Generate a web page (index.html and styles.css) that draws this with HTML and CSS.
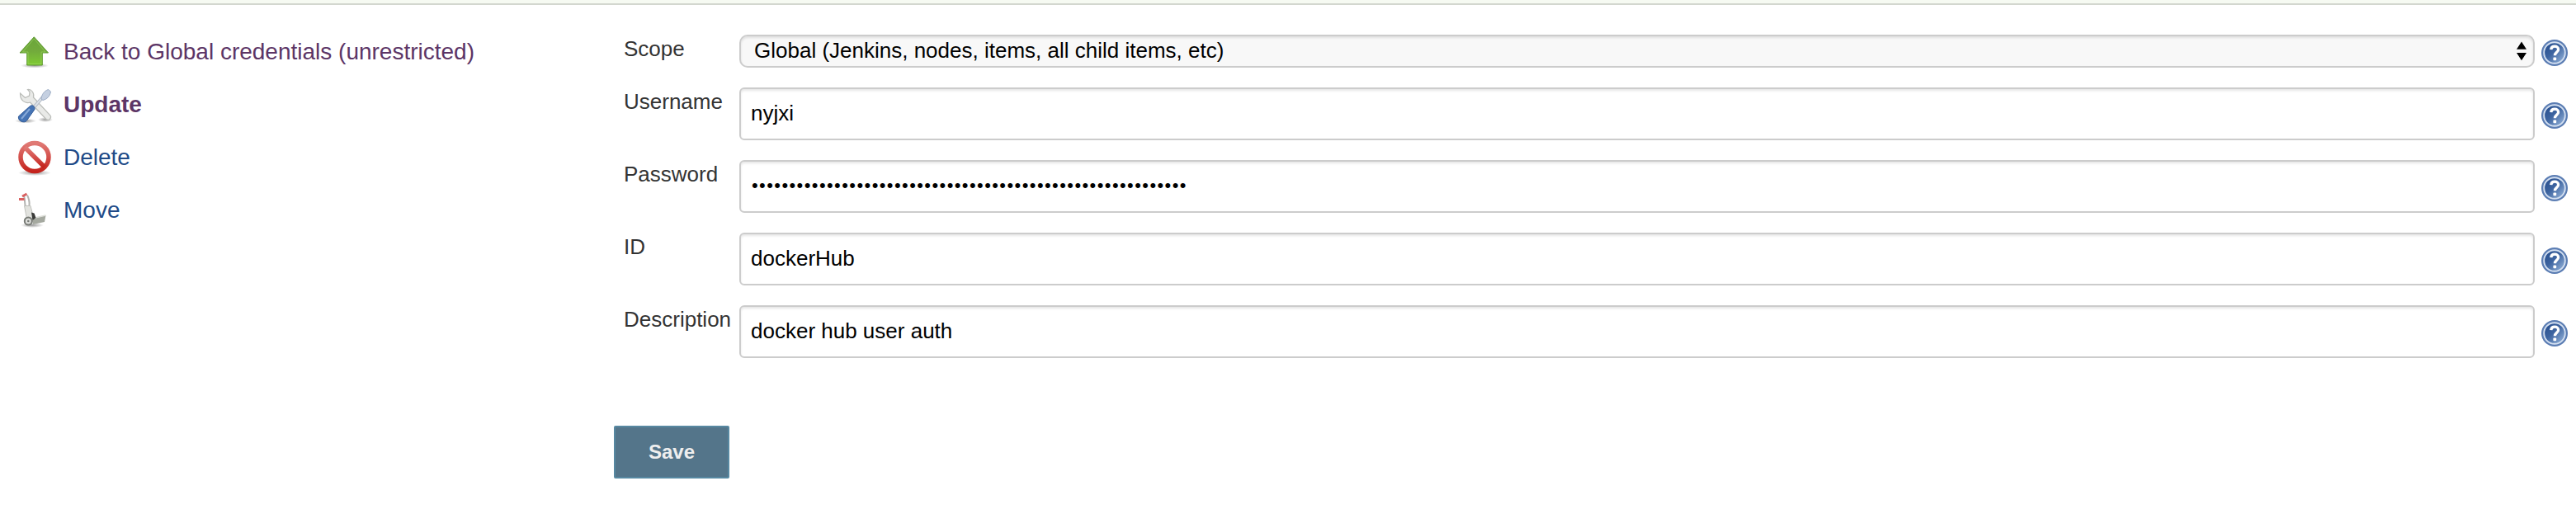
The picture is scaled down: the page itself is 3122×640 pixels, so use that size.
FILE: index.html
```
<!DOCTYPE html>
<html lang="en">
<head>
<meta charset="utf-8">
<title>Update credentials</title>
<link rel="stylesheet" href="styles.css">
</head>
<body>
<svg class="defs" width="0" height="0" aria-hidden="true">
  <defs>
    <linearGradient id="green" x1="0" y1="0" x2="0" y2="1"><stop offset="0" stop-color="#6aa53a"/><stop offset=".5" stop-color="#72aa3c"/><stop offset="1" stop-color="#7fcb32"/></linearGradient>
    <linearGradient id="red" x1="0" y1="0" x2="0" y2="1"><stop offset="0" stop-color="#e07a75"/><stop offset=".5" stop-color="#d4504b"/><stop offset="1" stop-color="#c4241d"/></linearGradient>
    <linearGradient id="blue" x1="0" y1="0" x2="1" y2="1"><stop offset="0" stop-color="#234a8a"/><stop offset=".45" stop-color="#3d64a0"/><stop offset="1" stop-color="#9dbbe0"/></linearGradient>
    <radialGradient id="shade"><stop offset="0" stop-color="#000" stop-opacity=".4"/><stop offset="1" stop-color="#000" stop-opacity="0"/></radialGradient>
    <symbol id="help" viewBox="0 0 32 32">
      <circle cx="16" cy="16" r="16" fill="#5b7db3"/>
      <circle cx="16" cy="16" r="12.8" fill="url(#blue)" stroke="#d3dff0" stroke-width="1.900"/>
      <path d="M11.700 12.200C12 9.200 14 8.200 16.200 8.200c2.600 0 4.400 1.500 4.400 3.700 0 3.300-4.200 3.500-4.200 7.300" fill="none" stroke="#fff" stroke-width="3.300"/>
      <rect x="14.400" y="21.500" width="3.800" height="3.700" rx="1" fill="#fff"/>
    </symbol>
  </defs>
</svg>
<header class="crumbs"></header>
<div class="page">
  <nav class="tasks">
    <a class="task visited" href="#">
      <svg class="icon" viewBox="0 0 48 48"><ellipse cx="24" cy="41.500" rx="17" ry="3" fill="url(#shade)"/><path d="M23.300 6.800 40.500 26H33.300V41H14.700V26H6Z" fill="url(#green)" stroke="#5f9a30" stroke-width="1"/><path d="M16 39.500V25h-6.500L23.300 9 37 25h-5v14.500Z" fill="none" stroke="#a6dc6a" stroke-opacity=".5"/></svg>
      <span>Back to Global credentials (unrestricted)</span></a>
    <a class="task visited current" href="#">
      <svg class="icon" viewBox="0 0 48 48"><ellipse cx="13" cy="44.500" rx="13" ry="3" fill="url(#shade)"/><ellipse cx="37" cy="43" rx="9" ry="3" fill="url(#shade)"/><path d="M15.500 6.500c4.500-.5 8.500 4 7 9.500L43 38c2 3-2 7-5 4.500L18.500 22C13 24 6 20 6.500 11l6 5.500 5-2.500.5-4.500Z" fill="#e9eae8" stroke="#bbbdb9" stroke-width="1.200"/><path d="m24 27 10-11.500" stroke="#aeb6c2" stroke-width="4"/><path d="m24 27 10-11.500" stroke="#dce1e8" stroke-width="2"/><path d="M32 18c.5-5 3-9.500 8.500-11.500l3 2.500c-1 6-4.500 9-9.500 10.500Z" fill="#c5d0e1" stroke="#9cacc5"/><path d="M18.500 26.500c2.500-2 6 .5 5.500 4L14.500 44C12 48 3 45 4.500 39Z" fill="#4674b5" stroke="#315b98"/><path d="M18 30 8 42" stroke="#86a9d8" stroke-width="2"/></svg>
      <span>Update</span></a>
    <a class="task" href="#">
      <svg class="icon" viewBox="0 0 48 48"><ellipse cx="24" cy="43.500" rx="20" ry="3.500" fill="url(#shade)"/><circle cx="24" cy="24.500" r="17" fill="#fff"/><g fill="none" stroke="url(#red)" stroke-width="5.500"><circle cx="24" cy="24.500" r="17"/><path d="m12 12.500 24 24"/></g></svg>
      <span>Delete</span></a>
    <a class="task" href="#">
      <svg class="icon" viewBox="0 0 48 48"><ellipse cx="21" cy="43" rx="14" ry="3" fill="url(#shade)"/><path d="M11 7.500c2 6 0 9 2.500 14M15 6.500c2 4 3 8 2.500 13" fill="none" stroke="#b4b4b2" stroke-width="2"/><path d="M11.500 19.500h7.500L23 35l-8 3Z" fill="#e2e3df" stroke="#c0c1bc"/><path d="m21 35.500 16.500-4.500-1.500 8-14 3Z" fill="#a5a9a0"/><path d="m22 34.500 15.500-3.500" stroke="#dcded8" stroke-width="1.500"/><path d="m20 27.500 3.500 1 2 5.500-4 3Z" fill="#3a3b39"/><path d="M5 11.500h6.500M9 8l5.500-3" fill="none" stroke="#d96060" stroke-width="3"/><circle cx="16.300" cy="38" r="4.500" fill="#dcddda" stroke="#777a75" stroke-width="2"/><circle cx="16.300" cy="38" r="1.300" fill="#777a75"/></svg>
      <span>Move</span></a>
  </nav>
  <main class="main">
    <div class="form">
      <label class="label" for="scope">Scope</label>
      <div class="select" id="scope"><span>Global (Jenkins, nodes, items, all child items, etc)</span>
        <svg class="arrows" viewBox="0 0 12 24"><path d="M6 .500 12 9.700H0ZM0 14H12L6 23.300Z"/></svg></div>
      <svg class="help select-help"><use href="#help"/></svg>
      <label class="label" for="username">Username</label><input class="input" id="username" type="text" value="nyjxi"><svg class="help"><use href="#help"/></svg>
      <label class="label" for="password">Password</label><div class="input password" id="password">••••••••••••••••••••••••••••••••••••••••••••••••••••••••••</div><svg class="help"><use href="#help"/></svg>
      <label class="label" for="id">ID</label><input class="input" id="id" type="text" value="dockerHub"><svg class="help"><use href="#help"/></svg>
      <label class="label" for="description">Description</label><input class="input" id="description" type="text" value="docker hub user auth"><svg class="help"><use href="#help"/></svg>
    </div>
    <div class="actions"><button class="save" type="button">Save</button></div>
  </main>
</div>
</body>
</html>
```
FILE: styles.css
```
* { box-sizing: border-box; }
body { margin: 0; background: #fff; color: #333; font-family: "Liberation Sans", Helvetica, Arial, sans-serif; font-size: 26px; }
.defs { display: block; }
.crumbs { height: 6px; background: #f6faf2; border-bottom: 2px solid #d3d7cf; }
.page { display: flex; padding-top: 30px; }
.tasks { flex: 0 0 744px; padding: 2px 0 0 18px; }
.task { display: flex; height: 64px; gap: 11px; color: #204a87; font-size: 28px; line-height: 50px; text-decoration: none; }
.visited { color: #5c3566; }
.current { font-weight: bold; }
.icon { width: 48px; height: 48px; flex: none; }
.main { flex: 1; }
.form { display: grid; grid-template-columns: 140px 1fr 32px; grid-template-rows: 40px; grid-auto-rows: 64px; row-gap: 24px; padding: 6px 10px 0 12px; align-items: start; }
.label { padding-top: 2px; line-height: 30px; }
.select, .input { width: auto; margin-right: 8px; border: 2px solid #ccc; color: #000; font: inherit; box-shadow: inset 0 2px 3px rgba(0,0,0,.1); }
.select { display: flex; justify-content: space-between; align-items: center; height: 40px; padding: 0 8px 0 16px; border-radius: 10px; background: #f8f8f8; line-height: 34px; }
.select span { padding-bottom: 2px; }
.arrows { width: 12px; height: 24px; }
.input { height: 64px; padding: 0 12px 2px; border-radius: 6px; background: #fff; line-height: 58px; }
.password { padding-left: 13px; font-size: 22px; line-height: 57px; letter-spacing: 1.4px; }
.help { width: 32px; height: 32px; margin-top: 18px; }
.select-help { margin-top: 6px; }
.actions { padding-top: 82px; }
.save { display: block; width: 140px; height: 64px; padding: 0; border: 2px solid #5788a1; border-radius: 2px; background: #54758a; color: #eee; font: bold 24px "Liberation Sans", Helvetica, Arial, sans-serif; }
```
